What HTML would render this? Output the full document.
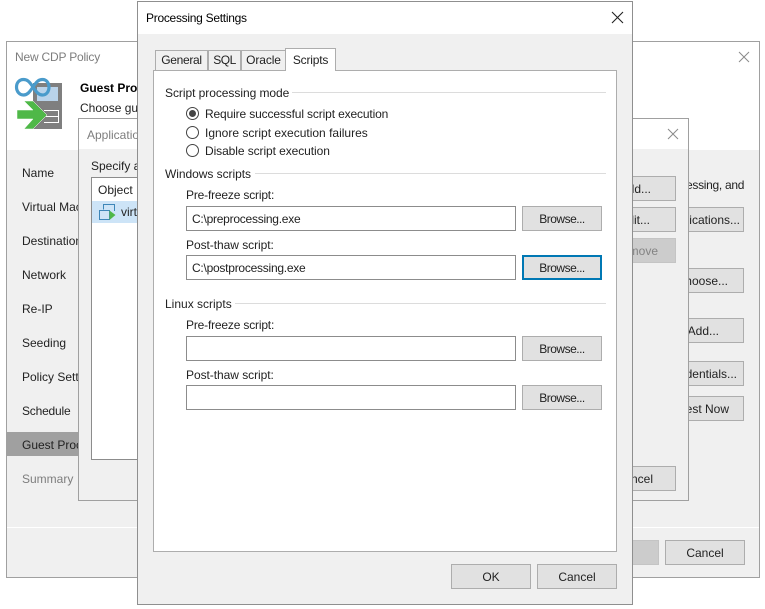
<!DOCTYPE html>
<html>
<head>
<meta charset="utf-8">
<style>
html,body{margin:0;padding:0;background:#fff;}
body{width:765px;height:609px;position:relative;overflow:hidden;font-family:"Liberation Sans",sans-serif;font-size:12px;color:#222;}
div,span.a{position:absolute;box-sizing:border-box;}
.t{white-space:nowrap;line-height:16px;height:16px;}
.win{background:#f0f0f0;border:1px solid #a0a0a0;overflow:hidden;}
.head{background:#fff;left:0;top:0;}
.btn{background:#e1e1e1;border:1px solid #adadad;height:25px;line-height:23px;padding-top:1px;text-align:center;white-space:nowrap;}
.br{letter-spacing:-.5px;}
.input{background:#fff;border:1px solid #8c8c8c;height:25px;line-height:23px;padding-top:1px;padding-left:5px;white-space:nowrap;letter-spacing:-.25px;}
.line{background:#dcdcdc;height:1px;}
.tab{background:#f0f0f0;border:1px solid #adadad;border-bottom:none;text-align:center;line-height:19px;height:20px;top:50px;}
.r{width:13px;height:13px;border:1px solid #444;border-radius:50%;background:#fff;left:186px;}
</style>
</head>
<body>

<!-- back window -->
<div class="win" style="left:6px;top:41px;width:754px;height:537px;">
  <div class="head" style="width:752px;height:108px;"></div>
  <div style="left:0;top:485px;width:752px;height:1px;background:#fff;"></div>
  <div class="t" style="left:8px;top:7px;color:#7d7d7d;letter-spacing:-.2px;">New CDP Policy</div>
  <svg style="position:absolute;left:729px;top:7px;" width="14" height="14" viewBox="0 0 14 14"><path d="M3 3L13 13M13 3L3 13" stroke="#8a8a8a" stroke-width="1" fill="none"/></svg>
  <svg style="position:absolute;left:0;top:30px;" width="70" height="70" viewBox="7 72 70 70">
    <rect x="33" y="83" width="29" height="46" fill="#7f7f7f"/>
    <rect x="37" y="87" width="21" height="14" fill="#b9d3ea"/>
    <g stroke="#fff" stroke-width="1" fill="none"><path d="M44 110.500H58M46 116.500H58M44 122.500H58"/><path d="M58.500 110V123"/></g>
    <path d="M33 87C29 81 27 79.500 23.500 79.500C19 79.500 16.500 83 16.500 87C16.500 91.500 19.500 95 23.500 95C27 95 29 93 33 87C37 81 39 79.500 42.500 79.500C46.500 79.500 49 83 49 87C49 91.500 46.500 95 42.500 95C39 95 37 93 33 87Z" fill="none" stroke="#4a9bcb" stroke-width="3.200"/>
    <path d="M17 110H33L24 101H33L47 115L33 129H24L33 119H17Z" fill="#4fb848" stroke="#fff" stroke-width=".5"/>
  </svg>
  <div class="t" style="left:73px;top:38px;font-weight:bold;color:#000;">Guest Processing</div>
  <div class="t" style="left:73px;top:58px;">Choose guest</div>
  <div class="t" style="left:15px;top:123px;">Name</div>
  <div class="t" style="left:15px;top:157px;">Virtual Machines</div>
  <div class="t" style="left:15px;top:191px;">Destination</div>
  <div class="t" style="left:15px;top:225px;">Network</div>
  <div class="t" style="left:15px;top:259px;">Re-IP</div>
  <div class="t" style="left:15px;top:293px;">Seeding</div>
  <div class="t" style="left:15px;top:327px;">Policy Settings</div>
  <div class="t" style="left:15px;top:361px;letter-spacing:-.2px;">Schedule</div>
  <div style="left:0;top:390px;width:80px;height:24px;background:#a0a0a0;"></div>
  <div class="t" style="left:15px;top:395px;">Guest Processing</div>
  <div class="t" style="left:15px;top:429px;color:#7d7d7d;">Summary</div>
  <div class="t" style="left:679px;top:135px;letter-spacing:-.3px;">essing, and</div>
  <div class="btn" style="left:650px;top:165px;width:87px;text-align:right;padding-right:3px;">Applications...</div>
  <div class="btn" style="left:650px;top:226px;width:87px;text-align:right;padding-right:15px;">Choose...</div>
  <div class="btn" style="left:650px;top:276px;width:87px;text-align:right;padding-right:24px;">Add...</div>
  <div class="btn" style="left:650px;top:319px;width:87px;text-align:right;padding-right:6px;">Credentials...</div>
  <div class="btn" style="left:650px;top:354px;width:87px;text-align:right;padding-right:14px;">Test Now</div>
  <div class="btn" style="left:578px;top:498px;width:74px;background:#cccccc;border-color:#c4c4c4;"></div>
  <div class="btn" style="left:658px;top:498px;width:80px;">Cancel</div>
</div>

<!-- middle dialog -->
<div class="win" style="left:78px;top:118px;width:611px;height:383px;">
  <div class="head" style="width:609px;height:30px;"></div>
  <div class="t" style="left:8px;top:8px;color:#7d7d7d;">Application-Aware</div>
  <svg style="position:absolute;left:587px;top:7px;" width="14" height="14" viewBox="0 0 14 14"><path d="M2 3L12 13M12 3L2 13" stroke="#8a8a8a" stroke-width="1" fill="none"/></svg>
  <div class="t" style="left:12px;top:39px;">Specify application</div>
  <div style="left:12px;top:58px;width:400px;height:283px;background:#fff;border:1px solid #8c8c8c;"></div>
  <div class="t" style="left:19px;top:63px;">Object</div>
  <div style="left:13px;top:82px;width:400px;height:22px;background:#cde4f7;"></div>
  <svg style="position:absolute;left:20px;top:84px;" width="18" height="18" viewBox="0 0 18 18">
    <path d="M4.500 6.500V1.500H15.500V8" fill="none" stroke="#3d86b8"/>
    <rect x="0.500" y="7.500" width="10" height="9" fill="#cde4f7" stroke="#3d86b8"/>
    <path d="M10.500 7.500V17L16.500 12Z" fill="#4fb848"/>
  </svg>
  <div class="t" style="left:42px;top:85px;">virtual machine</div>
  <div class="btn" style="left:520px;top:57px;width:77px;text-align:right;padding-right:24px;">Add...</div>
  <div class="btn" style="left:520px;top:88px;width:77px;text-align:right;padding-right:25px;">Edit...</div>
  <div class="btn" style="left:520px;top:119px;width:77px;background:#cccccc;border-color:#c4c4c4;color:#838383;text-align:right;padding-right:17px;">Remove</div>
  <div class="btn" style="left:520px;top:347px;width:77px;text-align:right;padding-right:22px;">Cancel</div>
</div>

<!-- front dialog -->
<div class="win" style="left:137px;top:1px;width:496px;height:604px;border-color:#8f8f8f;">
  <div class="head" style="width:494px;height:32px;"></div>
  <div class="t" style="left:8px;top:8px;color:#000;letter-spacing:-.28px;">Processing Settings</div>
  <svg style="position:absolute;left:472px;top:8px;" width="14" height="14" viewBox="0 0 14 14"><path d="M2 2L13 13M13 2L2 13" stroke="#222" stroke-width="1.100" fill="none"/></svg>
</div>

<!-- tab panel -->
<div class="tab" style="left:155px;width:53px;letter-spacing:-.3px;">General</div>
<div class="tab" style="left:208px;width:33px;letter-spacing:-.5px;">SQL</div>
<div class="tab" style="left:241px;width:45px;letter-spacing:-.1px;">Oracle</div>
<div style="left:153px;top:70px;width:464px;height:482px;background:#fff;border:1px solid #adadad;"></div>
<div class="tab" style="left:285px;top:48px;width:51px;height:23px;background:#fff;line-height:22px;z-index:2;letter-spacing:-.2px;">Scripts</div>

<div class="t" style="left:165px;top:85px;letter-spacing:-.05px;">Script processing mode</div>
<div class="line" style="left:292px;top:92px;width:314px;"></div>

<div class="r" style="top:107px;"><div style="left:2px;top:2px;width:7px;height:7px;border-radius:50%;background:#444;"></div></div>
<div class="t" style="left:205px;top:106px;letter-spacing:-.14px;">Require successful script execution</div>
<div class="r" style="top:126px;"></div>
<div class="t" style="left:205px;top:125px;">Ignore script execution failures</div>
<div class="r" style="top:144px;"></div>
<div class="t" style="left:205px;top:143px;letter-spacing:-.08px;">Disable script execution</div>

<div class="t" style="left:165px;top:166px;letter-spacing:-.05px;">Windows scripts</div>
<div class="line" style="left:255px;top:173px;width:351px;"></div>
<div class="t" style="left:186px;top:187px;letter-spacing:-.18px;">Pre-freeze script:</div>
<div class="input" style="left:186px;top:206px;width:330px;">C:\preprocessing.exe</div>
<div class="btn br" style="left:522px;top:206px;width:80px;">Browse...</div>
<div class="t" style="left:186px;top:237px;letter-spacing:-.05px;">Post-thaw script:</div>
<div class="input" style="left:186px;top:255px;width:330px;">C:\postprocessing.exe</div>
<div class="btn br" style="left:522px;top:255px;width:80px;border:2px solid #0078b4;line-height:21px;">Browse...</div>

<div class="t" style="left:165px;top:296px;">Linux scripts</div>
<div class="line" style="left:235px;top:303px;width:371px;"></div>
<div class="t" style="left:186px;top:317px;letter-spacing:-.18px;">Pre-freeze script:</div>
<div class="input" style="left:186px;top:336px;width:330px;"></div>
<div class="btn br" style="left:522px;top:336px;width:80px;">Browse...</div>
<div class="t" style="left:186px;top:367px;letter-spacing:-.05px;">Post-thaw script:</div>
<div class="input" style="left:186px;top:385px;width:330px;"></div>
<div class="btn br" style="left:522px;top:385px;width:80px;">Browse...</div>

<div class="btn" style="left:451px;top:564px;width:80px;">OK</div>
<div class="btn" style="left:537px;top:564px;width:80px;">Cancel</div>

</body>
</html>
